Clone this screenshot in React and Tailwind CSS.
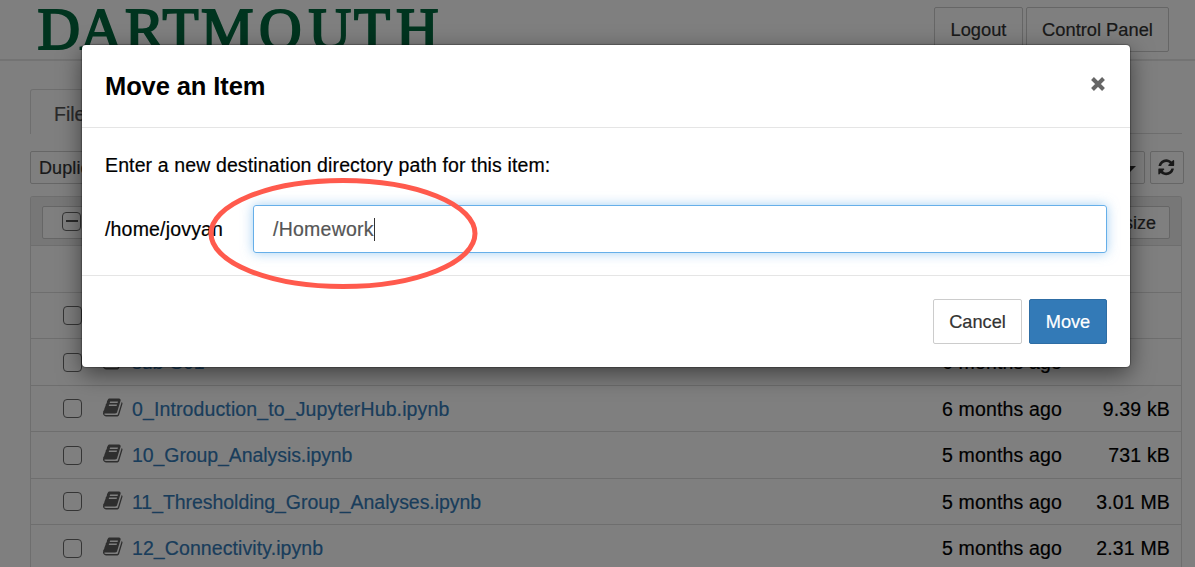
import React from "react";

function BookIcon() {
  return (
    <svg className="size-[21px] shrink-0 text-[#5c5c5c]" viewBox="0 0 1792 1792" fill="currentColor">
      <path d="M1639 478q40 57 18 129l-275 906q-19 64-76.500 107.500t-122.500 43.500h-923q-77 0-148.500-53.500t-99.500-131.500q-24-67-2-127 0-4 3-27t4-37q1-8-3-21.500t-3-19.500q2-11 8-21t16.500-23.500 16.500-23.500q23-38 45-91.500t30-91.500q3-10 .5-30t-.5-28q3-11 17-28t17-23q21-36 42-92t25-90q1-9-2.500-32t.5-28q4-13 22-30.500t22-22.500q19-26 42.500-84.500t27.500-96.500q1-8-3-25.500t-2-26.500q2-8 9-18t18-23 17-21q8-12 16.500-30.500t15-35 16-36 19.500-32 26.500-23.500 36-11.500 47.500 5.500l-1 3q38-9 51-9h761q74 0 114 56t18 130l-274 906q-36 119-71.500 153.500t-128.500 34.500h-869q-27 0-38 15-11 16-1 43 24 70 144 70h923q29 0 56-15.500t35-41.500l300-987q7-22 5-57 38 15 59 43zm-1064 2q-4 13 2 22.500t20 9.500h608q13 0 25.500-9.500t16.500-22.500l21-64q4-13-2-22.500t-20-9.500h-608q-13 0-25.500 9.500t-16.500 22.500zm-83 256q-4 13 2 22.500t20 9.500h608q13 0 25.500-9.500t16.500-22.500l21-64q4-13-2-22.500t-20-9.500h-608q-13 0-25.500 9.500t-16.500 22.500z" />
    </svg>
  );
}

function RefreshIcon() {
  return (
    <svg className="-ml-[2px] size-[18.500px] text-[#333]" viewBox="0 0 1792 1792" fill="currentColor">
      <path d="M1639 1056q0 5-1 7-64 268-268 434.500t-478 166.500q-146 0-282.500-55t-243.500-157l-129 129q-19 19-45 19t-45-19-19-45v-448q0-26 19-45t45-19h448q26 0 45 19t19 45-19 45l-137 137q71 66 161 102t187 36q134 0 250-65t186-179q11-17 53-117 8-23 30-23h192q13 0 22.500 9.500t9.500 22.500zm25-800v448q0 26-19 45t-45 19h-448q-26 0-45-19t-19-45 19-45l138-138q-148-137-349-137-134 0-250 65t-186 179q-11 17-53 117-8 23-30 23h-199q-13 0-22.500-9.500t-9.500-22.500v-7q65-268 270-434.500t480-166.500q146 0 284 55.500t245 156.500l130-129q19-19 45-19t45 19 19 45z" />
    </svg>
  );
}

const rows = [
  { h: "h-[47px]" },
  { h: "h-[46px]", check: true },
  { h: "h-[47px]", check: true, name: "sub-S01", time: "6 months ago", size: "", track: "" },
  { h: "h-[46px]", check: true, name: "0_Introduction_to_JupyterHub.ipynb", time: "6 months ago", size: "9.39 kB", track: "tracking-[0.12px]" },
  { h: "h-[47px]", check: true, name: "10_Group_Analysis.ipynb", time: "5 months ago", size: "731 kB", track: "tracking-[-0.08px]" },
  { h: "h-[46px]", check: true, name: "11_Thresholding_Group_Analyses.ipynb", time: "5 months ago", size: "3.01 MB", track: "tracking-[-0.05px]" },
  { h: "h-[47px]", check: true, name: "12_Connectivity.ipynb", time: "5 months ago", size: "2.31 MB", track: "tracking-[0.09px]" },
];

function Row({ row }) {
  return (
    <div className={`${row.h} flex shrink-0 items-center border-b border-[#ddd] pr-[11px] pl-8`}>
      {row.check && <span className="size-[19px] shrink-0 rounded-[4px] border border-[#6a6a6a]" />}
      {row.name && (
        <>
          <span className="-mt-[3px] ml-[21px] flex w-[29px]">
            <BookIcon />
          </span>
          <span className={`${row.track} grow text-[#337ab7]`}>{row.name}</span>
          <span className="w-[120px] text-right tracking-[0.16px] whitespace-nowrap">{row.time}</span>
          <span className="w-[108px] text-right tracking-[0.16px] whitespace-nowrap">{row.size}</span>
        </>
      )}
    </div>
  );
}

function Background() {
  return (
    <div className="flex h-full flex-col bg-white">
      <header className="flex h-[61px] shrink-0 items-start border-b-2 border-[#e7e7e7] pr-[26px] pl-9">
        <svg className="h-[59px] w-[410px] overflow-visible" viewBox="36 0 410 59">
          <text
            x="37.500 80 125 162.500 201 259 308.500 354 396"
            y="48.500"
            fontSize="59"
            fill="#00693e"
            stroke="#00693e"
            strokeWidth="2"
            fontFamily="'Liberation Serif', serif"
          >
            DARTMOUTH
          </text>
        </svg>
        <div className="mt-[7px] ml-auto flex gap-[3px] text-[18.300px] text-[#333]">
          <span className="flex h-[45px] w-[89px] items-center justify-center rounded-[2px] border border-[#ccc]">Logout</span>
          <span className="flex h-[45px] w-[143px] items-center justify-center rounded-[2px] border border-[#ccc]">Control Panel</span>
        </div>
      </header>
      <main className="flex grow flex-col pr-[13px] pl-[30px]">
        <nav className="mt-7 flex h-[45px] shrink-0">
          <span className="flex w-[92px] items-center rounded-t-[3px] border border-b-0 border-[#ddd] pt-1 pl-[23px] text-[#555]">Files</span>
          <span className="grow border-b border-[#ddd]" />
        </nav>
        <div className="-mr-[2px] mt-[17px] flex h-[33px] shrink-0 text-[18px] text-[#333]">
          <span className="flex w-[100px] items-center rounded-[2px] border border-[#ccc] pl-2 tracking-[0.1px]">Duplicate</span>
          <span className="ml-auto flex w-[70px] items-center justify-end rounded-[2px] border border-[#ccc] pt-[2px] pr-[8px]">
            <svg className="h-[6px] w-[12px]" viewBox="0 0 12 6">
              <path d="M0 0h12l-6 6z" fill="#333" />
            </svg>
          </span>
          <span className="ml-[5px] flex w-[34px] items-center justify-center rounded-[2px] border border-[#ccc]">
            <RefreshIcon />
          </span>
        </div>
        <div className="mt-3 flex grow flex-col overflow-hidden rounded-t-[3px] border border-b-0 border-[#ddd]">
          <div className="flex h-[49px] shrink-0 items-center justify-between border-b border-[#ddd] bg-[#eee] px-[11px] pt-[2px] text-[#333]">
            <span className="flex h-[33px] w-[90px] items-center rounded-[2px] border border-[#ccc] bg-white pl-[19px]">
              <span className="-mt-[2px] flex size-[19px] items-center justify-center rounded-[4px] border border-[#6a6a6a]">
                <span className="h-[2px] w-[12px] bg-[#555]" />
              </span>
            </span>
            <span className="flex h-[33px] w-[110px] items-center justify-end rounded-[2px] border border-[#ccc] bg-white pt-[2px] pr-[13px] text-[18px]">File size</span>
          </div>
          {rows.map((row, i) => (
            <Row key={i} row={row} />
          ))}
        </div>
      </main>
    </div>
  );
}

function Dialog() {
  return (
    <section className="relative flex h-[322px] w-[1048px] flex-col rounded-[4px] bg-white shadow-[0_7px_23px_rgba(0,0,0,0.5),0_0_1px_1px_rgba(0,0,0,0.25)]">
      <header className="flex h-[83px] items-center justify-between border-b border-[#e5e5e5] px-[23px]">
        <h4 className="text-[25.500px] font-bold tracking-[-0.1px] [-webkit-text-stroke:0]">Move an Item</h4>
        <svg className="mr-[1px] mb-[5px] size-4" viewBox="0 0 16 16">
          <path d="M2.500 2.500l11 11M13.500 2.500l-11 11" stroke="#666" strokeWidth="4" />
        </svg>
      </header>
      <div className="flex h-[148px] flex-col border-b border-[#e5e5e5] px-[23px] pt-[22px]">
        <p className="h-[30px] leading-[30px] tracking-[0.12px]">Enter a new destination directory path for this item:</p>
        <div className="mt-[25px] flex h-[48px] items-center">
          <span className="w-[148px] tracking-[0.18px]">/home/jovyan</span>
          <span className="flex h-full grow items-center rounded-[3px] border border-[#66afe9] pl-[19px] tracking-[0.25px] text-[#555] shadow-[0_0_12px_rgba(102,175,233,0.6)]">
            /Homework
            <span className="h-[23px] w-px bg-[#333]" />
          </span>
        </div>
      </div>
      <footer className="flex grow items-center justify-end gap-[7px] px-[23px] text-[18.200px]">
        <span className="flex h-[45px] w-[89px] items-center justify-center rounded-[2px] border border-[#ccc] text-[#333]">Cancel</span>
        <span className="flex h-[45px] w-[78px] items-center justify-center rounded-[2px] border border-[#2e6da4] bg-[#337ab7] text-white">Move</span>
      </footer>
      <svg className="absolute top-[131px] left-[124px] h-[116px] w-[274px]" viewBox="0 0 274 116">
        <ellipse cx="137" cy="57.500" rx="132" ry="53" fill="none" stroke="#ff5a4d" strokeWidth="5" />
      </svg>
    </section>
  );
}

export default function App() {
  return (
    <div className="relative h-[567px] w-[1195px] overflow-hidden font-['Liberation_Sans',Arial,sans-serif] text-[19.500px] leading-[28px] text-black [-webkit-text-stroke:0.2px]">
      <Background />
      <div className="absolute inset-0 flex items-start justify-center bg-black/50 pt-[45px] pl-[17px]">
        <Dialog />
      </div>
    </div>
  );
}
